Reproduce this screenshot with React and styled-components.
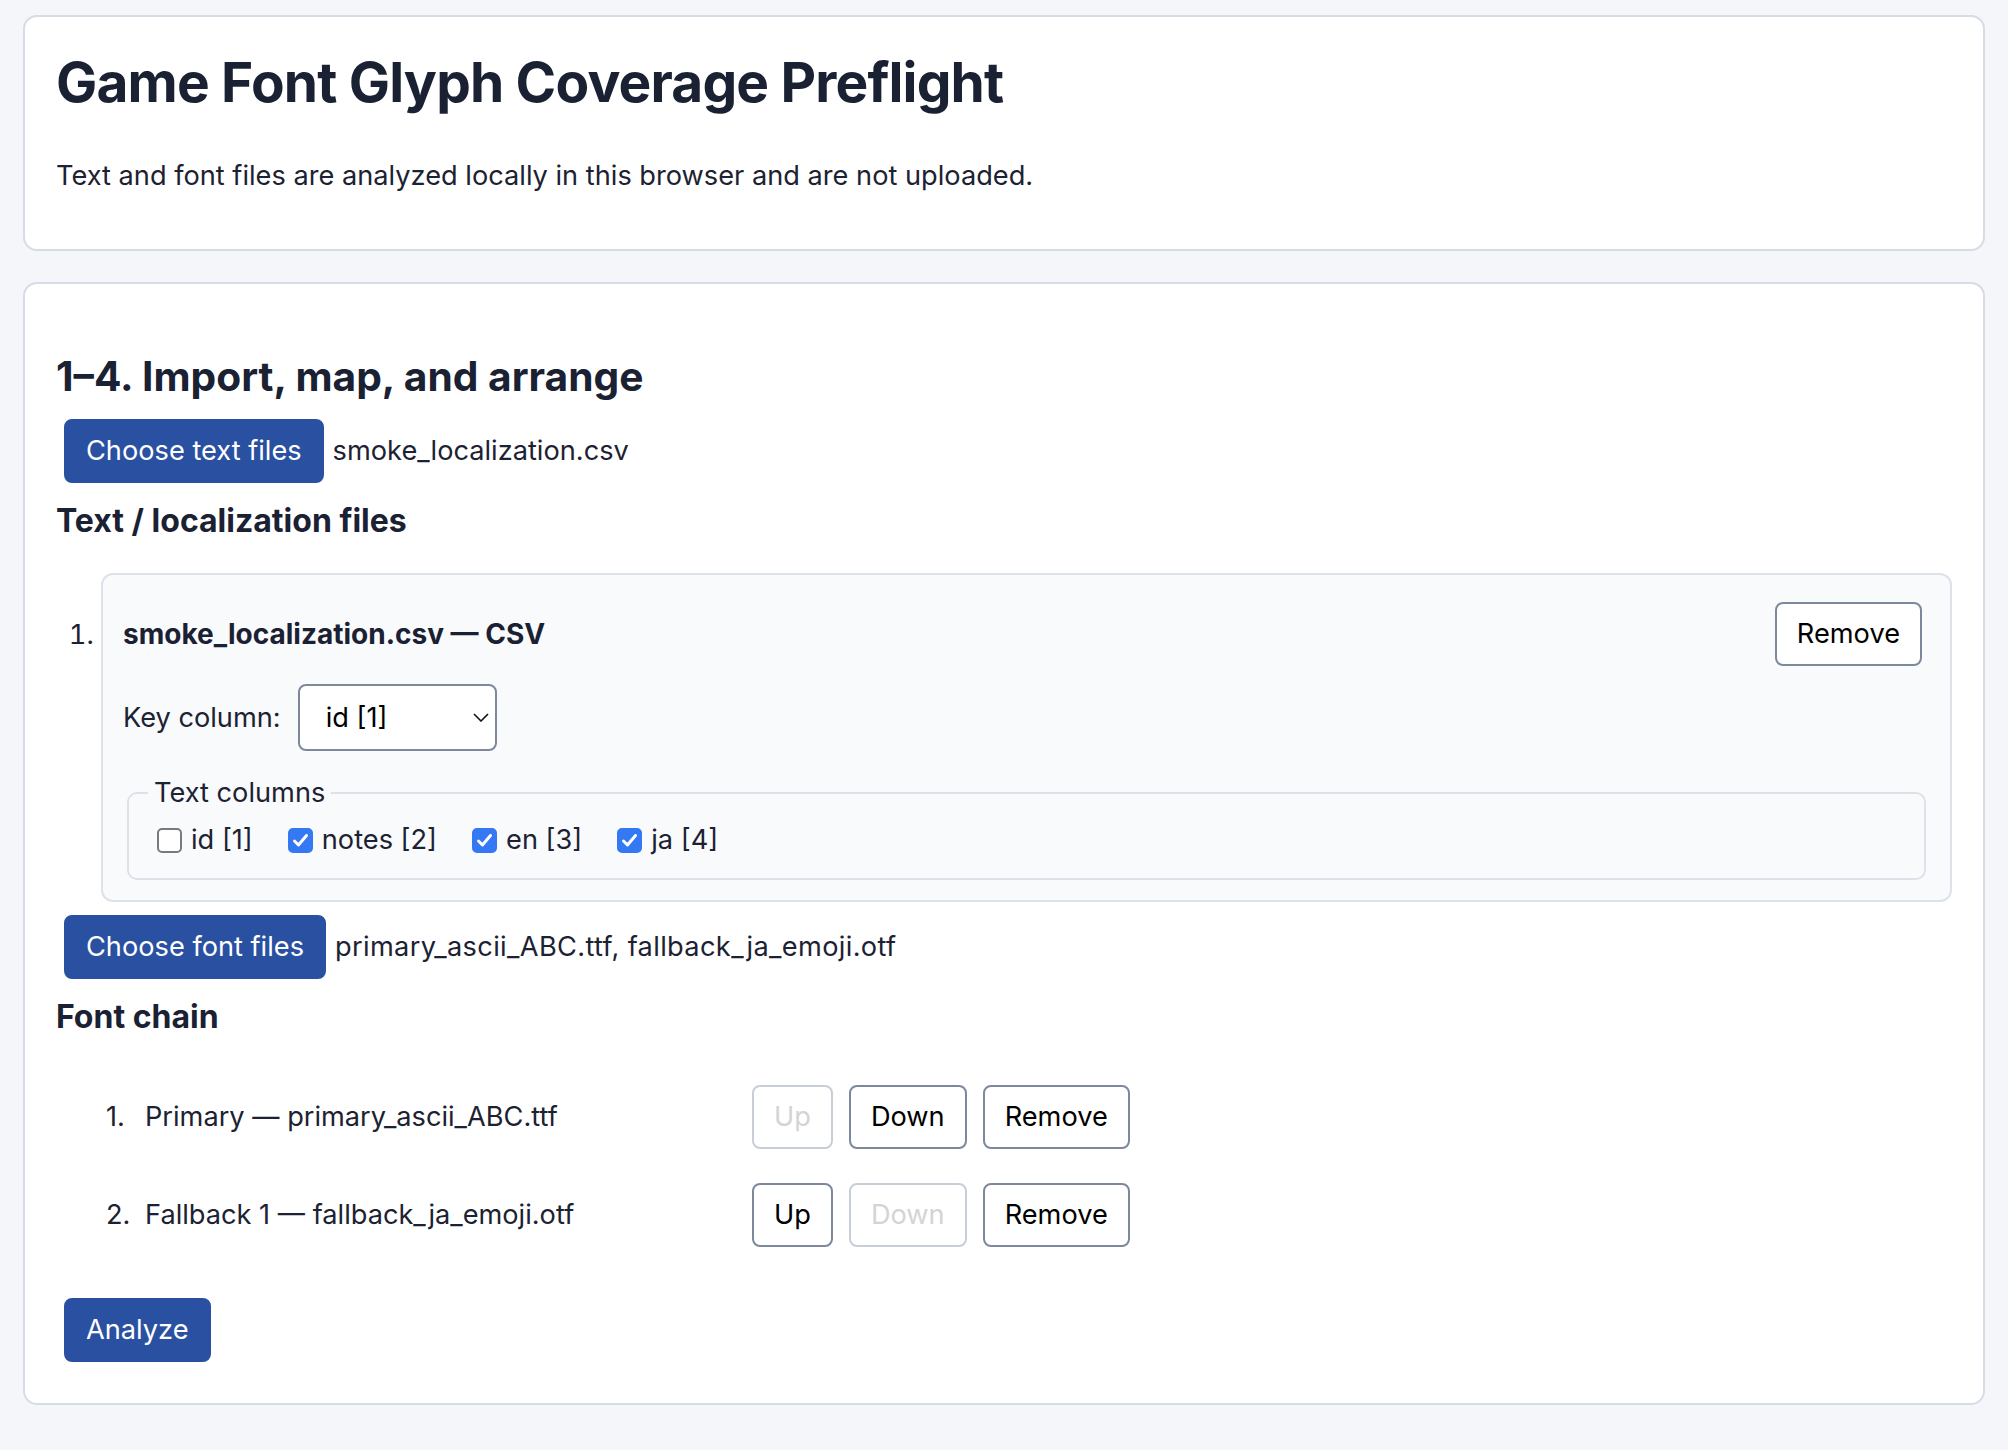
import styled, { createGlobalStyle, css } from 'styled-components'

const GlobalStyle = createGlobalStyle`
  html, body {
    margin: 0;
    padding: 0;
    background: #f4f6f9;
  }
  body {
    font-family: Inter, "Noto Sans", "Liberation Sans", sans-serif;
    color: #1c2232;
  }
  * {
    box-sizing: border-box;
  }
`

const Page = styled.main`
  padding: 15px 23px 46px;
`

const Card = styled.section`
  background: #ffffff;
  border: 2px solid #d6dce6;
  border-radius: 14px;
  padding: ${(p) => p.$pad || '31px'};
  margin-bottom: 31px;
`

const Title = styled.h1`
  margin: 0 0 43px;
  font-size: 55px;
  line-height: 68px;
  font-weight: 700;
  letter-spacing: -0.015em;
  color: #1a2133;
`

const Note = styled.p`
  margin: 0 0 25px;
  font-size: 27.2px;
  line-height: 34px;
`

const SectionTitle = styled.h2`
  margin: 36px 0 0;
  font-size: 40.7px;
  line-height: 51px;
  font-weight: 700;
  color: #1a2133;
`

const SubTitle = styled.h3`
  margin: 20px 0 0;
  font-size: 32px;
  line-height: 36px;
  font-weight: 700;
  color: #1a2133;
`

const PickerRow = styled.div`
  display: flex;
  align-items: center;
  margin-top: ${(p) => p.$top}px;
  font-size: 27.2px;
  line-height: 34px;
`

const buttonBase = css`
  font-family: inherit;
  font-size: 27.2px;
  line-height: 36px;
  height: 64px;
  padding: 12px 20px;
  border-radius: 8px;
  border: 2px solid;
  margin: 0 8px;
  cursor: pointer;
  white-space: nowrap;
`

const PrimaryButton = styled.button`
  ${buttonBase}
  background: #2a51a1;
  border-color: #2a51a1;
  color: #ffffff;
`

const OutlineButton = styled.button`
  ${buttonBase}
  background: #ffffff;
  border-color: #7c899d;
  color: #000000;

  &:disabled {
    border-color: #c8ced8;
    color: #d3d4d6;
    cursor: default;
  }
`

const FileName = styled.span`
  margin-left: 1px;
  letter-spacing: ${(p) => (p.$loose ? '0.35px' : 'normal')};
`

const FileList = styled.ol`
  margin: 34px 0 0;
  padding-left: 45px;
  list-style: decimal;

  & > li::marker {
    font-size: 27.2px;
    color: #1c2232;
  }
`

const FileItem = styled.li`
  background: #f9fafc;
  border: 2px solid #dde2ea;
  border-radius: 12px;
  padding: 20px;
  font-size: 27.2px;
  line-height: 34px;
`

const ItemHeader = styled.div`
  display: flex;
  align-items: center;
  justify-content: space-between;
  padding-top: 7px;
`

const ItemTitle = styled.strong`
  font-size: 28px;
  font-weight: 700;
  color: #1a2133;
`

const KeyRow = styled.label`
  display: flex;
  align-items: center;
  gap: 17px;
  margin-top: 18px;
`

const SelectWrap = styled.span`
  position: relative;
  display: inline-flex;
`

const Select = styled.select`
  appearance: none;
  width: 199px;
  height: 67px;
  padding: 0 40px 0 26px;
  font-family: inherit;
  font-size: 27.2px;
  color: #000000;
  background: #ffffff;
  border: 2px solid #7c899d;
  border-radius: 8px;
`

const Chevron = styled.svg`
  position: absolute;
  right: 8px;
  top: 29px;
  pointer-events: none;
`

const ColumnSet = styled.fieldset`
  margin: 25px 4px 0;
  padding: 13px 19px 21px;
  border: 2px solid #dde2ea;
  border-radius: 10px;
  min-inline-size: 0;
`

const Legend = styled.legend`
  padding: 0 6px;
  font-size: 27.2px;
  line-height: 34px;
`

const CheckRow = styled.div`
  display: flex;
  align-items: center;
  gap: 26px;
`

const CheckItem = styled.label`
  display: flex;
  align-items: center;
  gap: 9px;
  padding-left: 9px;
`

const Box = styled.span`
  width: 25px;
  height: 25px;
  border-radius: 5px;
  display: inline-flex;
  align-items: center;
  justify-content: center;
  background: ${(p) => (p.$checked ? '#3479f3' : '#ffffff')};
  border: 2px solid ${(p) => (p.$checked ? '#3479f3' : '#7a7a7a')};
`

const ChainList = styled.ol`
  list-style: none;
  margin: 50px 0 0;
  padding: 0 0 0 50px;
  display: flex;
  flex-direction: column;
  gap: 34px;
`

const ChainRow = styled.li`
  display: flex;
  align-items: center;
  font-size: 27.2px;
  line-height: 34px;
`

const ChainNum = styled.span`
  width: 39px;
`

const ChainLabel = styled.span`
  width: 599px;
`

const ActionRow = styled.div`
  margin-top: 51px;
`

const textColumns = [
  { label: 'id [1]', checked: false },
  { label: 'notes [2]', checked: true },
  { label: 'en [3]', checked: true },
  { label: 'ja [4]', checked: true },
]

const fontChain = [
  { role: 'Primary', file: 'primary_ascii_ABC.ttf' },
  { role: 'Fallback 1', file: 'fallback_ja_emoji.otf' },
]

function CheckBox({ checked }) {
  return (
    <Box $checked={checked} role="checkbox" aria-checked={checked}>
      {checked && (
        <svg width="17" height="15" viewBox="0 0 17 15">
          <polyline
            points="2.5,8 6.5,12 14.5,2.5"
            fill="none"
            stroke="#ffffff"
            strokeWidth="3"
            strokeLinecap="round"
            strokeLinejoin="round"
          />
        </svg>
      )}
    </Box>
  )
}

function App() {
  return (
    <>
      <GlobalStyle />
      <Page>
        <Card>
          <Title>Game Font Glyph Coverage Preflight</Title>
          <Note>Text and font files are analyzed locally in this browser and are not uploaded.</Note>
        </Card>

        <Card $pad="31px 31px 41px">
          <SectionTitle>1–4. Import, map, and arrange</SectionTitle>
          <PickerRow $top={17}>
            <PrimaryButton>Choose text files</PrimaryButton>
            <FileName>smoke_localization.csv</FileName>
          </PickerRow>

          <SubTitle>Text / localization files</SubTitle>
          <FileList>
            <FileItem>
              <ItemHeader>
                <ItemTitle>smoke_localization.csv — CSV</ItemTitle>
                <OutlineButton>Remove</OutlineButton>
              </ItemHeader>
              <KeyRow>
                <span>Key column:</span>
                <SelectWrap>
                  <Select defaultValue="id">
                    <option value="id">id [1]</option>
                    <option value="notes">notes [2]</option>
                    <option value="en">en [3]</option>
                    <option value="ja">ja [4]</option>
                  </Select>
                  <Chevron width="16" height="9" viewBox="0 0 16 9">
                    <polyline points="1,1 8,8 15,1" fill="none" stroke="#111" strokeWidth="1.6" />
                  </Chevron>
                </SelectWrap>
              </KeyRow>
              <ColumnSet>
                <Legend>Text columns</Legend>
                <CheckRow>
                  {textColumns.map((c) => (
                    <CheckItem key={c.label}>
                      <CheckBox checked={c.checked} />
                      <span>{c.label}</span>
                    </CheckItem>
                  ))}
                </CheckRow>
              </ColumnSet>
            </FileItem>
          </FileList>

          <PickerRow $top={13}>
            <PrimaryButton>Choose font files</PrimaryButton>
            <FileName $loose>primary_ascii_ABC.ttf, fallback_ja_emoji.otf</FileName>
          </PickerRow>

          <SubTitle>Font chain</SubTitle>
          <ChainList>
            {fontChain.map((f, i) => (
              <ChainRow key={f.file}>
                <ChainNum>{i + 1}.</ChainNum>
                <ChainLabel>
                  {f.role} — {f.file}
                </ChainLabel>
                <OutlineButton disabled={i === 0}>Up</OutlineButton>
                <OutlineButton disabled={i === fontChain.length - 1}>Down</OutlineButton>
                <OutlineButton>Remove</OutlineButton>
              </ChainRow>
            ))}
          </ChainList>

          <ActionRow>
            <PrimaryButton>Analyze</PrimaryButton>
          </ActionRow>
        </Card>
      </Page>
    </>
  )
}

export default App
